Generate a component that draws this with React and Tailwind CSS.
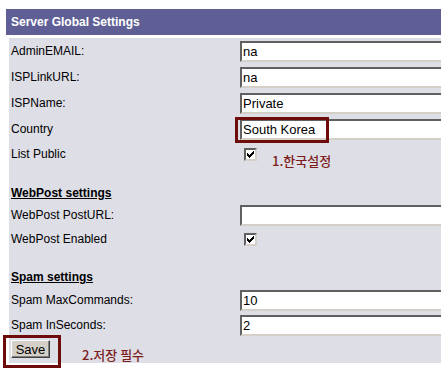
import React from 'react';

const inputCls =
  "h-[21px] w-[240px] shrink-0 bg-white border-2 border-t-[#606060] border-l-[#606060] border-b-[#d4d0c8] border-r-[#d4d0c8] pl-[1px] text-[13px] leading-[17px] text-black outline-none font-['Liberation_Sans',Arial,sans-serif]";

function Check() {
  // classic 7x7 pixel check mark
  const px = [
    [6, 0], [5, 1], [6, 1], [0, 2], [4, 2], [5, 2], [6, 2],
    [0, 3], [1, 3], [3, 3], [4, 3], [5, 3], [0, 4], [1, 4], [2, 4], [3, 4], [4, 4],
    [1, 5], [2, 5], [3, 5], [2, 6],
  ];
  return (
    <div className="ml-[4px] w-[13px] h-[13px] shrink-0 bg-white border-2 border-t-[#606060] border-l-[#606060] border-b-[#d4d0c8] border-r-[#d4d0c8] flex items-center justify-center">
      <svg width="7" height="7" viewBox="0 0 7 7" shapeRendering="crispEdges">
        {px.map(([x, y], i) => (
          <rect key={i} x={x} y={y} width="1" height="1" fill="#000" />
        ))}
      </svg>
    </div>
  );
}

function Row({ label, h, children }) {
  return (
    <div className={`flex items-center ${h}`}>
      <div className="w-[231px] shrink-0 pl-[2px] text-[12px]">{label}</div>
      <div className="flex items-center">{children}</div>
    </div>
  );
}

export default function App() {
  return (
    <div className="relative w-[441px] h-[373px] overflow-hidden bg-white text-black font-['Liberation_Sans',Arial,sans-serif]">
      <div className="w-[500px] ml-[6px] mt-[9px] h-[26px] bg-[#5f5f96] flex items-center pl-[5px] text-[12px] font-bold text-white">
        Server Global Settings
      </div>

      <div className="w-[500px] ml-[9px] mt-[3px] h-[325px] bg-[#dedee6] flex flex-col">
        <Row label="AdminEMAIL:" h="h-[26px]">
          <input className={inputCls} defaultValue="na" />
        </Row>
        <Row label="ISPLinkURL:" h="h-[26px]">
          <input className={inputCls} defaultValue="na" />
        </Row>
        <Row label="ISPName:" h="h-[26px]">
          <input className={inputCls} defaultValue="Private" />
        </Row>
        <Row label="Country" h="h-[26px]">
          <input className={inputCls} defaultValue="South Korea" />
        </Row>
        <Row label="List Public" h="h-[24px]">
          <Check />
        </Row>

        <div className="h-[16px]" />
        <div className="h-[22px] flex items-center pl-[2px] text-[12px] font-bold underline">WebPost settings</div>
        <Row label="WebPost PostURL:" h="h-[22px]">
          <input className={inputCls} defaultValue="" />
        </Row>
        <Row label="WebPost Enabled" h="h-[26px]">
          <Check />
        </Row>

        <div className="h-[14px]" />
        <div className="h-[22px] flex items-center pl-[2px] text-[12px] font-bold underline">Spam settings</div>
        <Row label="Spam MaxCommands:" h="h-[24px]">
          <input className={inputCls} defaultValue="10" />
        </Row>
        <Row label="Spam InSeconds:" h="h-[26px]">
          <input className={inputCls} defaultValue="2" />
        </Row>
        <div className="h-[22px] flex items-center pl-[2px]">
          <button className="w-[39px] h-[18px] bg-[#d4d0c8] border border-t-white border-l-white border-b-[#404040] border-r-[#404040] shadow-[inset_-1px_-1px_0_#808080] text-[13px] leading-none">
            Save
          </button>
        </div>
      </div>

      {/* annotations */}
      <div className="absolute left-[235px] top-[117px] w-[94px] h-[26px] border-[3px] border-[#6e0c0c]" />
      <div className="absolute left-[272px] top-[152px] text-[13px] font-medium text-[#7d1e1e] font-['Noto_Sans_CJK_KR',sans-serif] leading-[18px]">
        1.한국설정
      </div>
      <div className="absolute left-[3px] top-[335px] w-[58px] h-[33px] border-[3px] border-[#6e0c0c]" />
      <div className="absolute left-[82px] top-[346px] text-[13px] font-medium text-[#7d1e1e] font-['Noto_Sans_CJK_KR',sans-serif] leading-[18px]">
        2.저장 필수
      </div>
    </div>
  );
}
